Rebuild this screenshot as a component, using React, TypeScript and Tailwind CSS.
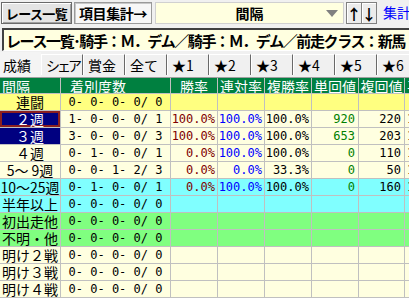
import React from 'react';

const JP = "font-['Noto_Sans_CJK_JP','Noto_Sans',sans-serif]";
const MONO = "font-['DejaVu_Sans_Mono','Liberation_Mono',monospace]";

const TABS = [
  { t: '成績', tr: '' },
  { t: 'シェア', tr: 'tracking-[-3px]' },
  { t: '賞金', tr: '' },
  { t: '全て', tr: '' },
  { t: '★1', tr: '' },
  { t: '★2', tr: '' },
  { t: '★3', tr: '' },
  { t: '★4', tr: '' },
  { t: '★5', tr: '' },
  { t: '★6', tr: '' },
];

const HEADERS = ['間隔', '着別度数', '勝率', '連対率', '複勝率', '単回値', '複回値', '平均人気'];

type Row = {
  label: string;
  rowBg: string;
  labelBg?: string;
  focus?: boolean;
  rec: string;
  vals: string[];
  extra?: string;
};

const ROWS: Row[] = [
  { label: '連闘', rowBg: 'bg-[#ffff80]', rec: '0- 0- 0- 0/ 0', vals: ['', '', '', '', ''] },
  { label: '２週', rowBg: 'bg-[#ffffe0]', labelBg: 'navy', focus: true, rec: '1- 0- 0- 0/ 1', vals: ['100.0%', '100.0%', '100.0%', '920', '220'], extra: '1' },
  { label: '３週', rowBg: 'bg-[#ffffe0]', labelBg: 'navy', rec: '3- 0- 0- 0/ 3', vals: ['100.0%', '100.0%', '100.0%', '653', '203'], extra: '1' },
  { label: '４週', rowBg: 'bg-[#ffffe0]', rec: '0- 1- 0- 0/ 1', vals: ['0.0%', '100.0%', '100.0%', '0', '110'], extra: '1' },
  { label: '5～ 9週', rowBg: 'bg-[#ffffe0]', rec: '0- 0- 1- 2/ 3', vals: ['0.0%', '0.0%', '33.3%', '0', '50'], extra: '1' },
  { label: '10～25週', rowBg: 'bg-[#80ffff]', rec: '0- 1- 0- 0/ 1', vals: ['0.0%', '100.0%', '100.0%', '0', '160'], extra: '1' },
  { label: '半年以上', rowBg: 'bg-[#80ffff]', rec: '0- 0- 0- 0/ 0', vals: ['', '', '', '', ''] },
  { label: '初出走他', rowBg: 'bg-[#80ff80]', rec: '0- 0- 0- 0/ 0', vals: ['', '', '', '', ''] },
  { label: '不明・他', rowBg: 'bg-[#80ff80]', rec: '0- 0- 0- 0/ 0', vals: ['', '', '', '', ''] },
  { label: '明け２戦', rowBg: 'bg-[#ffffe0]', rec: '0- 0- 0- 0/ 0', vals: ['', '', '', '', ''] },
  { label: '明け３戦', rowBg: 'bg-[#ffffe0]', rec: '0- 0- 0- 0/ 0', vals: ['', '', '', '', ''] },
  { label: '明け４戦', rowBg: 'bg-[#ffffe0]', rec: '0- 0- 0- 0/ 0', vals: ['', '', '', '', ''] },
];

const VAL_COLORS = ['text-[#800000]', 'text-[#0000ff]', 'text-black', 'text-[#008000]', 'text-black'];

const GRID = 'grid grid-cols-[61px_110px_47px_47px_47px_47px_46px_80px]';
const CELL = 'flex items-center border-r border-b border-[#c0c0c0] overflow-hidden whitespace-pre leading-none';

export default function App() {
  return (
    <div className={`w-[409px] h-[298px] overflow-hidden bg-[#f0f0f0] text-black ${JP}`}>
      {/* toolbar */}
      <div className="flex items-start h-[28px] pt-[2px] pl-[1px] gap-[2px] whitespace-nowrap">
        <button className="h-[22px] w-[71px] shrink-0 flex items-center justify-center bg-[#e4e4e4] border border-[#6a6a6a] shadow-[inset_1px_1px_#ffffff,inset_-1px_-1px_#a0a0a0] text-[13px] font-bold tracking-[-0.6px] leading-none">
          レース一覧
        </button>
        <button className="h-[22px] w-[78px] shrink-0 flex items-center justify-center bg-[#f7f7f7] border border-[#9a9a9a] shadow-[inset_1px_1px_#c8c8c8] text-[14px] font-bold tracking-[-0.4px] leading-none">
          項目集計→
        </button>
        <div className="ml-[1px] h-[22px] w-[189px] shrink-0 relative flex items-center justify-center bg-[#ffffe0] border border-[#d0d0d0]">
          <span className="text-[14px] font-bold leading-none">間隔</span>
          <svg className="absolute right-[5px] top-[7px]" width="12" height="8" viewBox="0 0 12 8">
            <path d="M0 0 H12 L6 7 Z" fill="#808080" />
          </svg>
        </div>
        <div className="flex shrink-0">
          <button className="h-[22px] w-[16px] flex items-center justify-center bg-[#ececec] border border-[#808080] shadow-[inset_1px_1px_#ffffff] text-[15px] font-bold leading-none">↑</button>
          <button className="h-[22px] w-[15px] flex items-center justify-center bg-[#ececec] border border-l-0 border-[#808080] shadow-[inset_1px_1px_#ffffff] text-[15px] font-bold leading-none">↓</button>
        </div>
        <span className="ml-[4px] mt-[3px] text-[14px] leading-none text-[#0000ff]">集計表</span>
      </div>

      {/* condition text box */}
      <div className="ml-[2px] w-[430px] h-[23px] flex items-center bg-[#ffffe0] border-t-2 border-l-2 border-t-[#404040] border-l-[#404040] border-b border-b-white pl-[2px] whitespace-nowrap overflow-hidden">
        <span className="text-[15px] font-bold tracking-[-1.4px] leading-none">
          レース一覧･騎手：Ｍ．デム／騎手：Ｍ．デム／前走クラス：新馬
        </span>
      </div>

      {/* tabs */}
      <div className="h-[27px] pt-[2px] flex items-end border-b border-[#a0a0a0] whitespace-nowrap">
        {TABS.map((t, i) => (
          <div
            key={t.t}
            className={
              i === 0
                ? 'h-[25px] w-[41px] shrink-0 flex items-center pl-[3px] text-[14px] leading-none bg-[#f4f4f4]'
                : `h-[21px] mb-[2px] w-[42px] shrink-0 flex items-center pl-[4px] text-[14px] leading-none border-l border-l-white border-r border-r-[#696969] border-t border-t-white ${t.tr}`
            }
          >
            {t.t}
          </div>
        ))}
      </div>

      {/* table */}
      <div className="w-[520px] text-[14px]">
        <div className={`${GRID} h-[16px] bg-[#008040] text-white`}>
          {HEADERS.map((h, i) => (
            <div
              key={h}
              className={`${CELL} ${i === 0 ? 'pl-[2px]' : i === 1 ? 'pl-[9px]' : i === 7 ? 'pl-[2px]' : 'justify-center'}`}
            >
              {h}
            </div>
          ))}
        </div>
        {ROWS.map((r) => (
          <div key={r.label} className={`${GRID} h-[17px] ${r.rowBg}`}>
            <div
              className={`${CELL} justify-center ${
                r.labelBg === 'navy' ? 'bg-[#000080] text-white' : ''
              } ${r.focus ? 'shadow-[inset_0_0_0_2px_#8b2020]' : ''}`}
            >
              {r.label}
            </div>
            <div className={`${CELL} ${MONO} text-[12px] justify-center`}>{r.rec}</div>
            {r.vals.map((v, i) => (
              <div key={i} className={`${CELL} ${MONO} text-[12px] justify-end ${i < 3 ? 'pr-[2px]' : 'pr-[3px]'} ${VAL_COLORS[i]}`}>
                {v}
              </div>
            ))}
            <div className={`${CELL} ${MONO} text-[12px] pl-[2px]`}>{r.extra ?? ''}</div>
          </div>
        ))}
      </div>
    </div>
  );
}
